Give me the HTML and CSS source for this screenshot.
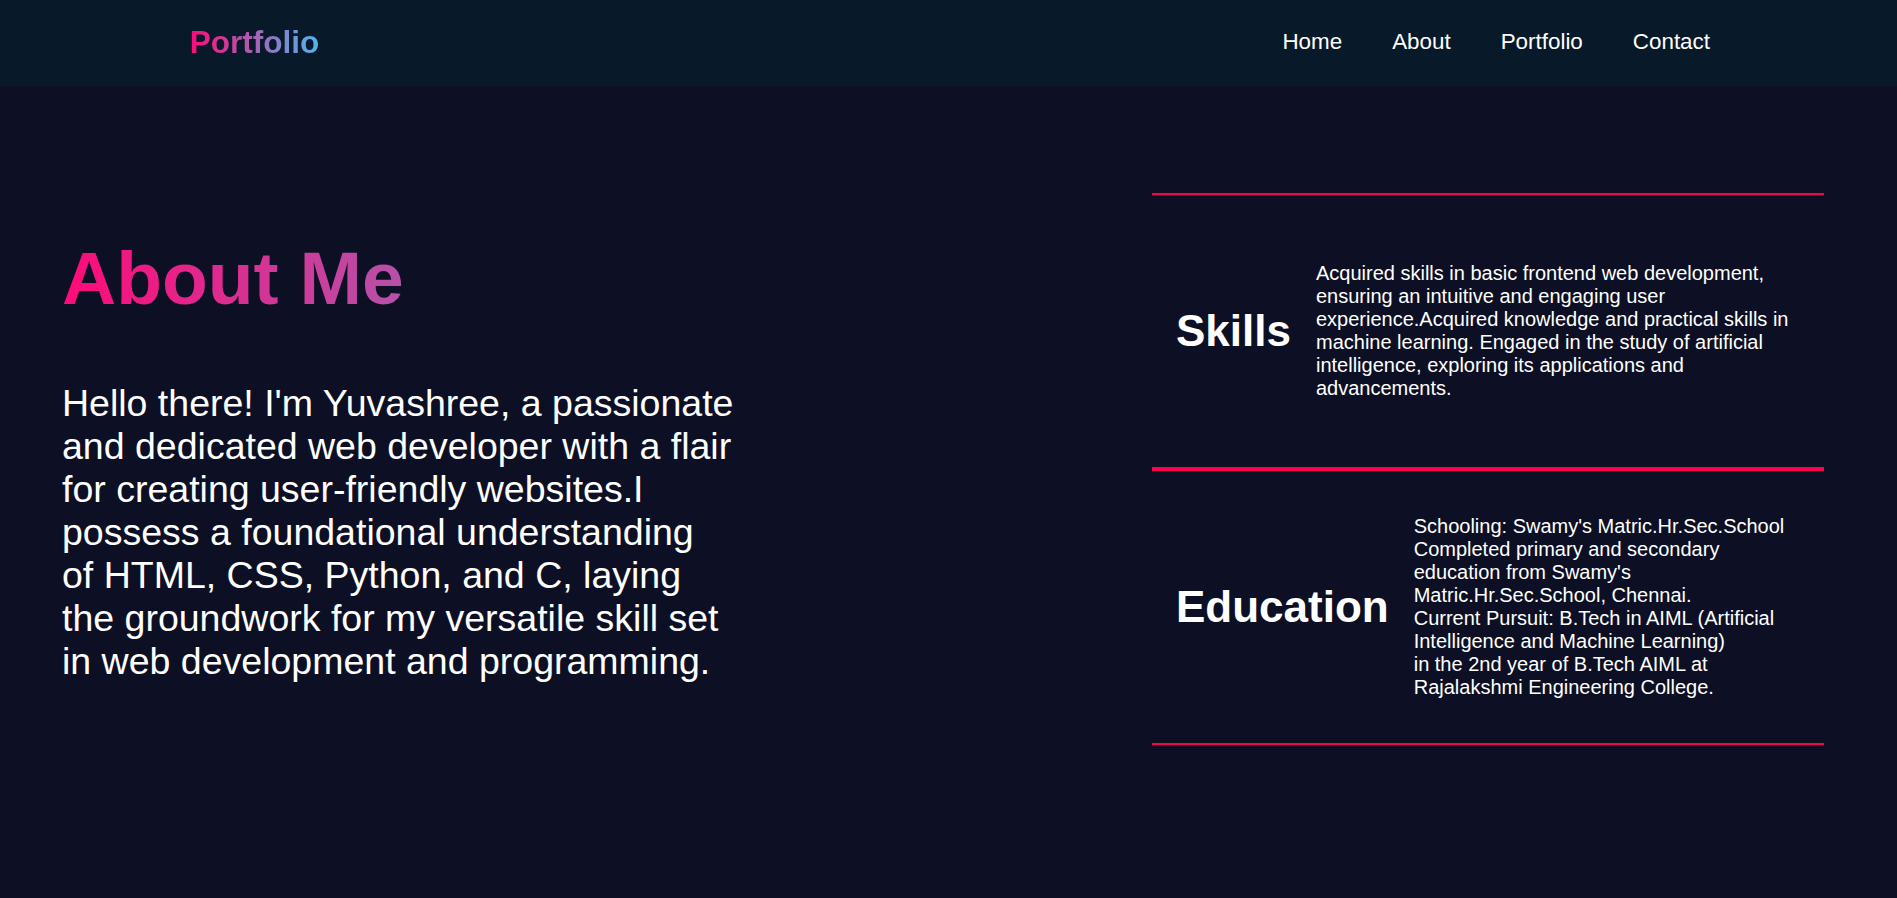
FILE: index.html
```html
<!DOCTYPE html>
<html lang="en">
<head>
<meta charset="utf-8">
<title>Portfolio</title>
<link rel="stylesheet" href="styles.css">
</head>
<body>
<header class="header">
  <a class="logo" href="#">Portfolio</a>
  <nav class="nav">
    <a href="#">Home</a>
    <a href="#">About</a>
    <a href="#">Portfolio</a>
    <a href="#">Contact</a>
  </nav>
</header>
<main class="about">
  <section class="intro">
    <h1 class="title">About Me</h1>
    <p class="bio">Hello there! I'm Yuvashree, a passionate and dedicated web developer with a flair for creating user-friendly websites.I possess a foundational understanding<br>of HTML, CSS, Python, and C, laying the groundwork for my versatile skill set in web development and programming.</p>
  </section>
  <section class="details">
    <div class="row">
      <h2 class="row-title">Skills</h2>
      <div class="row-text">Acquired skills in basic frontend web development, ensuring an intuitive and engaging user experience.Acquired knowledge and practical skills in machine learning. Engaged in the study of artificial intelligence, exploring its applications and advancements.</div>
    </div>
    <div class="row">
      <h2 class="row-title">Education</h2>
      <div class="row-text">Schooling: Swamy's Matric.Hr.Sec.School<br>Completed primary and secondary<br>education from Swamy's<br>Matric.Hr.Sec.School, Chennai.<br>Current Pursuit: B.Tech in AIML (Artificial<br>Intelligence and Machine Learning)<br>in the 2nd year of B.Tech AIML at<br>Rajalakshmi Engineering College.</div>
    </div>
  </section>
</main>
</body>
</html>
```
FILE: styles.css
```css
* {
  box-sizing: border-box;
}

html, body {
  margin: 0;
  padding: 0;
}

body {
  background: #0d1024;
  color: #ffffff;
  font-family: "Liberation Sans", Arial, sans-serif;
  min-height: 898px;
}

.header {
  height: 86px;
  background: #081a29;
  display: flex;
  align-items: center;
  justify-content: space-between;
  padding: 0 187px 2px 10%;
}

.logo {
  font-size: 31.5px;
  font-weight: 700;
  text-decoration: none;
  background: linear-gradient(90deg, #ff0a78, #4db8ee);
  -webkit-background-clip: text;
  background-clip: text;
  color: transparent;
}

.nav {
  display: flex;
  gap: 50px;
}

.nav a {
  color: #ffffff;
  text-decoration: none;
  font-size: 22.4px;
}

.about {
  display: flex;
  align-items: flex-start;
  justify-content: space-between;
  padding: 0 73px 0 62px;
}

.intro {
  width: 677px;
  padding-top: 149px;
}

.title {
  margin: 0;
  font-size: 75px;
  line-height: 86px;
  font-weight: 700;
  background: linear-gradient(90deg, #ff0a78 0, #4db8ee 830px);
  -webkit-background-clip: text;
  background-clip: text;
  color: transparent;
}

.bio {
  margin: 61px 0 0;
  font-size: 37.5px;
  line-height: 43px;
}

.details {
  width: 672px;
  margin-top: 107px;
  display: grid;
  grid-auto-rows: 1fr;
}

.row {
  display: flex;
  align-items: center;
  padding: 44px 12px 44px 24px;
  border-top: 2px solid #ff004f;
  border-bottom: 2px solid #ff004f;
}

.row-title {
  margin: 0 25px 0 0;
  font-size: 44px;
  font-weight: 700;
  white-space: nowrap;
}

.row-text {
  flex: 1;
  font-size: 20px;
  line-height: 23px;
}
```
